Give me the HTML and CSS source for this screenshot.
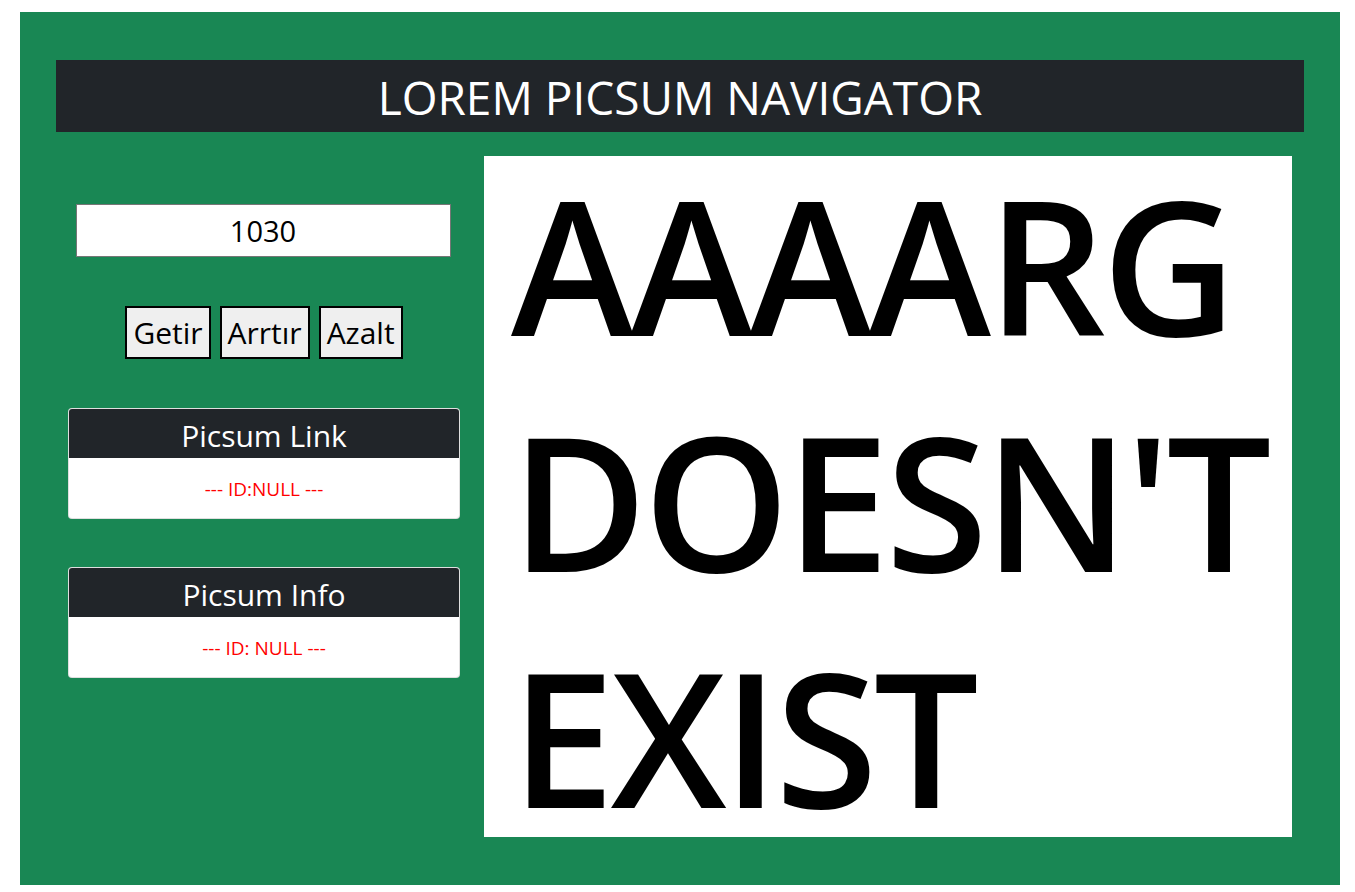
FILE: index.html
```html
<!DOCTYPE html>
<html lang="tr">
<head>
<meta charset="utf-8">
<title>Lorem Picsum Navigator</title>
<link rel="stylesheet" href="styles.css">
</head>
<body>
<div class="app">
  <h1 class="title">LOREM PICSUM NAVIGATOR</h1>
  <div class="main">
    <div class="side">
      <input class="id-input" type="text" value="1030">
      <div class="buttons">
        <button class="btn">Getir</button>
        <button class="btn">Arrtır</button>
        <button class="btn">Azalt</button>
      </div>
      <div class="card">
        <div class="card-head">Picsum Link</div>
        <div class="card-body">--- ID:NULL ---</div>
      </div>
      <div class="card">
        <div class="card-head">Picsum Info</div>
        <div class="card-body">--- ID: NULL ---</div>
      </div>
    </div>
    <div class="picture">
      <div class="picture-text">AAAARG<br>DOESN'T<br>EXIST</div>
    </div>
  </div>
</div>
</body>
</html>
```
FILE: styles.css
```css
* { box-sizing: border-box; }
html, body { margin: 0; padding: 0; background: #fff; }
body { font-family: "Open Sans", "Noto Sans", sans-serif; }
.app {
  margin: 12px 15px 7px 20px;
  width: 1320px;
  height: 873px;
  background: #198754;
  padding: 48px 36px 48px 36px;
  display: flex;
  flex-direction: column;
}
.title {
  margin: 0;
  height: 72px;
  background: #212529;
  color: #fff;
  font-weight: 400;
  font-size: 46px;
  line-height: 74px;
  text-align: center;
}
.main {
  margin-top: 24px;
  padding: 0 12px;
  display: flex;
  gap: 24px;
  flex: 1;
}
.side {
  width: 392px;
  display: flex;
  flex-direction: column;
  align-items: center;
  padding-top: 48px;
}
.id-input {
  width: 375px;
  height: 53px;
  border: 1px solid #767676;
  background: #fff;
  font-family: inherit;
  font-size: 29px;
  text-align: center;
  color: #000;
  padding: 0;
  margin-right: 2px;
}
.buttons {
  margin-top: 49px;
  display: flex;
  gap: 9px;
}
.btn {
  height: 53px;
  border: 2px solid #000;
  background: #efefef;
  font-family: inherit;
  font-size: 30px;
  padding: 0 6px;
  color: #000;
}
.card {
  width: 392px;
  margin-top: 49px;
  background: #fff;
  border: 1px solid rgba(0,0,0,0.125);
  border-radius: 4px;
  overflow: hidden;
}
.card + .card { margin-top: 48px; }
.card-head {
  height: 49px;
  background: #212529;
  color: #fff;
  font-size: 30px;
  line-height: 54px;
  text-align: center;
}
.card-body {
  height: 60px;
  color: #f00;
  font-size: 19px;
  line-height: 62px;
  text-align: center;
}
.picture {
  width: 808px;
  height: 681px;
  background: #fff;
  padding-left: 27px;
}
.picture-text {
  margin-top: -10px;
  font-family: "Open Sans", sans-serif;
  font-weight: 600;
  font-size: 186px;
  line-height: 236px;
  color: #000;
  letter-spacing: -4px;
}
```
